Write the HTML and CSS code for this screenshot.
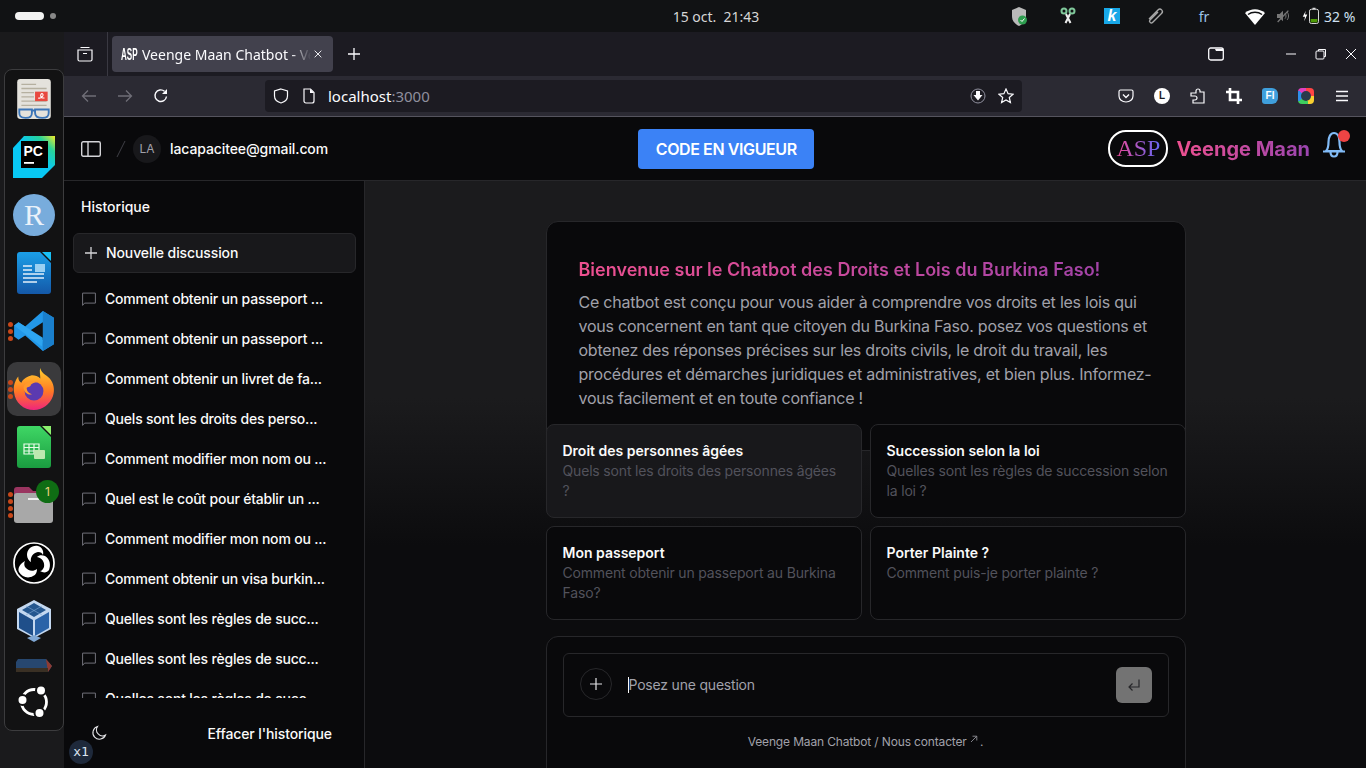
FILE: index.html
```html
<!DOCTYPE html>
<html lang="fr">
<head>
    <meta charset="utf-8">
    <title>Veenge Maan Chatbot</title>
    <link rel="stylesheet" href="styles.css">
</head>
<body>
    <!-- barre du haut du bureau -->
    <header class="topbar">
        <div class="workspaces"><span class="ws-pill"></span><span class="ws-dot"></span></div>
        <div class="clock">15 oct.&nbsp;&nbsp;21:43</div>
        <div class="tray">
            <svg class="tray-icon" viewBox="0 0 24 24"><path d="M11 3l7 3v6c0 5-3 8-7 10-4-2-7-5-7-10V6z" fill="#b9b9b9"/><circle cx="14.500" cy="16" r="4.500" fill="#2e9e4f"/><path d="M12.500 16l1.500 1.500 2.500-3" stroke="#fff" fill="none"/></svg>
            <svg class="tray-icon wide" viewBox="0 0 24 24" fill="none"><circle cx="8" cy="7" r="2.500" stroke="#7fc79a" stroke-width="2"/><circle cx="16" cy="7" r="2.500" stroke="#7fc79a" stroke-width="2"/><path d="M10 10l4.500 9M14 10l-4.500 9" stroke="#eee" stroke-width="2"/></svg>
            <span class="tray-k">k</span>
            <svg class="tray-icon" viewBox="0 0 24 24" fill="none"><path d="M5 15l9-9c2.500-2.500 6 1 3.500 3.500l-9 9c-1.500 1.500-4-1-2.500-2.500l8-8" stroke="#a8a8a8" stroke-width="1.400"/></svg>
            <span class="tray-lang wide">fr</span>
            <svg class="tray-icon wifi" viewBox="0 0 24 24"><path d="M2 9c6-5 14-5 20 0l-10 12z" fill="#fff"/><path d="M5 10.500c4-3 10-3 14 0" stroke="#111214" stroke-width="1.500" fill="none"/></svg>
            <svg class="tray-icon sound" viewBox="0 0 24 24" fill="#777"><path d="M3 9h4l5-5v16l-5-5H3z"/><path d="M15 8c2 2 2 6 0 8M18 6c3 3 3 9 0 12" stroke="#777" stroke-width="1.500" fill="none"/><path d="M4 21L20 4" stroke="#777" stroke-width="2"/></svg>
            <svg class="tray-batt" viewBox="0 0 24 24" fill="none"><path d="M5 5L1 13h3l-1 6 4-9H4z" fill="#fff"/><rect x="10" y="3" width="12" height="19" rx="2.500" stroke="#ddd" stroke-width="1.300"/><rect x="14" y="1" width="4" height="2" fill="#ddd"/><rect x="11.500" y="16" width="9" height="4.500" fill="#4e9a06"/></svg>
            <span class="tray-pct">32 %</span>
        </div>
    </header>

    <div class="desktop">
        <!-- dock -->
        <div class="dock-col">
            <nav class="dock">
                <div class="dock-item">
                    <svg class="app" viewBox="0 0 34 40"><rect x="1" y="1" width="32" height="38" rx="3" fill="#e4e2dc"/><path d="M5 6h14M5 10h24M5 14h12M5 18h12M5 22h24M5 26h24" stroke="#b5b0a0" stroke-width="1.200"/><rect x="18" y="13" width="12" height="9" fill="#e8493f"/><path d="M21 19c3 1 6-3 4-4s-3 5 2 4" stroke="#fff" fill="none"/><path d="M3 30h12v3c0 3-1 5-6 5s-6-2-6-5zM18 30h13v3c0 3-1 5-6 5s-7-2-7-5zM15 31h3" stroke="#3b75b8" stroke-width="1.800" fill="none"/></svg>
                </div>
                <div class="dock-item">
                    <svg class="app" viewBox="0 0 42 42"><defs><linearGradient id="pc" x1="0" y1="1" x2="1" y2="0"><stop offset=".55" stop-color="#08c8f4"/><stop offset=".8" stop-color="#28d39a"/><stop offset="1" stop-color="#f4ec28"/></linearGradient></defs><path d="M11 0h31v29L29 42H0V12z" fill="url(#pc)"/><rect x="8" y="5" width="27" height="27" fill="#000"/><text x="10.500" y="20" class="pc-text">PC</text><rect x="11" y="26" width="10" height="1.800" fill="#fff"/></svg>
                </div>
                <div class="dock-item">
                    <svg class="app" viewBox="0 0 42 42"><circle cx="21" cy="21" r="21" fill="#78acdc"/><text x="21" y="31" text-anchor="middle" class="r-text">R</text></svg>
                </div>
                <div class="dock-item">
                    <svg class="app" viewBox="0 0 34 42"><defs><linearGradient id="lo" x1="0" y1="0" x2="0" y2="1"><stop offset="0" stop-color="#1b9fe8"/><stop offset="1" stop-color="#1458a8"/></linearGradient></defs><path d="M3 0h20l11 11v28a3 3 0 0 1-3 3H3a3 3 0 0 1-3-3V3a3 3 0 0 1 3-3z" fill="url(#lo)"/><path d="M25 0l9 9V0z" fill="#19c0f5"/><path d="M6 14h9M6 18h9M6 22h21M6 26h21M6 30h14" stroke="#e3f0fa" stroke-width="1.700"/><rect x="18" y="12" width="10" height="8" fill="#9ad0f2"/></svg>
                </div>
                <div class="dock-item">
                    <span class="dots"><i></i><i></i><i></i></span>
                    <svg class="app" viewBox="0 0 38 38"><path d="M27 1l10 6v24l-10 6-16-14-6 4-4-3V14l4-3 6 4z" fill="#2297e8"/><path d="M27 1l10 6v24l-10 6z" fill="#1a7fcc"/><path d="M27 11L15 19l12 8z" fill="#111214"/><path d="M5 11L1 14l25 19 1-8z" fill="#2ea5f0"/></svg>
                </div>
                <div class="dock-item active">
                    <span class="dots"><i></i><i></i><i></i></span>
                    <svg class="app" viewBox="0 0 40 40"><defs><linearGradient id="ff" x1="0" y1="0" x2="0" y2="1"><stop offset="0" stop-color="#ffcf2e"/><stop offset=".55" stop-color="#ff7a24"/><stop offset="1" stop-color="#f0257c"/></linearGradient></defs><path d="M26 0c1 5 5 6 9 10 4 5 5 11 3 17-3 8-10 13-18 13C10 40 2 33 1 23 0 17 2 12 5 8c0 3 1 5 3 6 2-4 6-6 10-7 3 0 6 1 8 3 0-4-1-7 0-10z" fill="url(#ff)"/><circle cx="20" cy="22" r="9" fill="#5b3ab0"/><path d="M10 18c3-6 11-7 16-4-4-1-7 0-9 2 0 2-3 2-4 3 0 3 2 5 5 6-4 1-8-2-8-7z" fill="#ff9a2a"/></svg>
                </div>
                <div class="dock-item">
                    <svg class="app" viewBox="0 0 34 42"><defs><linearGradient id="lc" x1="0" y1="0" x2="0" y2="1"><stop offset="0" stop-color="#3fd765"/><stop offset="1" stop-color="#1a9c40"/></linearGradient></defs><path d="M3 0h20l11 11v28a3 3 0 0 1-3 3H3a3 3 0 0 1-3-3V3a3 3 0 0 1 3-3z" fill="url(#lc)"/><path d="M25 0l9 9V0z" fill="#8cf06e"/><path d="M7 18h15v10H7zM7 21.500h15M7 25h15M12 18v10M17 18v10" stroke="#e8fbe8" stroke-width="1.200" fill="none"/><rect x="17" y="24" width="11" height="9" rx="1" fill="#bce8b0"/></svg>
                </div>
                <div class="dock-item">
                    <span class="dots four"><i></i><i></i><i></i><i></i></span>
                    <svg class="app folder" viewBox="0 0 40 36"><path d="M3 0h12l4 4h6a3 3 0 0 1 3 3v5H0V3a3 3 0 0 1 3-3z" fill="#9a3560"/><rect y="6" width="39" height="30" rx="3" fill="#a8a8a8"/><rect x="14" y="11" width="11" height="2" fill="#eee"/></svg>
                    <span class="badge">1</span>
                </div>
                <div class="dock-item">
                    <svg class="app" viewBox="0 0 42 42"><circle cx="21" cy="21" r="20" fill="#000" stroke="#fff" stroke-width="1.700"/><path d="M25 4c-6-1-11 3-11 9 0 3 2 6 4 7-1-5 2-9 7-10 3 0 4 1 5 3 1-4-1-8-5-9zM6 30c3 5 9 7 14 4 3-1 4-4 4-7-4 3-9 2-12-2-1-2-1-4 0-6-4 2-8 7-6 11zM36 28c2-5 1-11-4-14-3-1-6-1-8 1 5 1 8 5 7 10-1 2-2 4-4 4 3 2 7 2 9-1z" fill="#fff"/></svg>
                </div>
                <div class="dock-item">
                    <svg class="app" viewBox="0 0 36 42"><path d="M18 0l17 9v20L18 38 1 29V9z" fill="#c4d8f0"/><path d="M17 20L3 12v16l14 8z" fill="#1f4f8a"/><path d="M19 20l14-8v16l-14 8z" fill="#2a63a8"/><path d="M18 3l12 7-12 7-12-7z" fill="#25578f"/><path d="M11 38l7 4 7-4-7-3z" fill="#7fa7d4"/><path d="M10 6l16 9M26 6l-16 9" stroke="#7fa7d4" stroke-width=".6"/></svg>
                </div>
                <div class="dock-item peek">
                    <svg class="app-peek" viewBox="0 0 38 14"><path d="M3 0h28l6 7-4 6H1V3z" fill="#27476f"/><path d="M31 0l6 7-4 6z" fill="#8e3a32"/><rect x="1" y="9" width="32" height="4" fill="#3a3024"/></svg>
                </div>
                <div class="dock-item">
                    <svg class="app small" viewBox="0 0 32 32"><circle cx="16" cy="16" r="12.500" stroke="#fff" stroke-width="2.800" fill="none"/><g fill="#fff" stroke="#121213" stroke-width="2"><circle cx="23" cy="4.500" r="5"/><circle cx="4.500" cy="14" r="5"/><circle cx="21.500" cy="27" r="5"/></g></svg>
                </div>
            </nav>
        </div>

        <!-- fenêtre du navigateur -->
        <div class="browser">
            <div class="tabbar">
                <svg class="tb-icon tab-view" viewBox="0 0 16 16" fill="none"><path d="M3.500 1.500h9M1 4h14v9.500a1.500 1.500 0 0 1-1.500 1.500h-11A1.500 1.500 0 0 1 1 13.500zM6 7.500h4" stroke="#fbfbfe" stroke-width="1.200"/></svg>
                <span class="tab-sep"></span>
                <div class="tab">
                    <span class="tab-fav">ASP</span>
                    <span class="tab-title">Veenge Maan Chatbot - Veenge Maan</span>
                    <svg class="tab-close" viewBox="0 0 12 12"><path d="M2 2l8 8M10 2l-8 8" stroke="#fbfbfe" stroke-width="1.100"/></svg>
                </div>
                <svg class="tb-icon tab-new" viewBox="0 0 16 16"><path d="M8 2v12M2 8h12" stroke="#fbfbfe" stroke-width="1.300"/></svg>
                <div class="win-btns">
                    <svg class="tb-icon win-folder" viewBox="0 0 16 16" fill="none"><rect x="0.700" y="2" width="14.600" height="12" rx="2" stroke="#fbfbfe" stroke-width="1.300"/><path d="M1 3h6l1 2h7V3z" fill="#fbfbfe"/></svg>
                    <svg class="win-icon win-min" viewBox="0 0 12 12"><path d="M1 6h10" stroke="#fbfbfe"/></svg>
                    <svg class="win-icon" viewBox="0 0 12 12" fill="none"><rect x="1" y="3" width="8" height="8" rx="1" stroke="#fbfbfe"/><path d="M3.500 3V1.500h7v7H9" stroke="#fbfbfe"/></svg>
                    <svg class="win-icon" viewBox="0 0 12 12"><path d="M1 1l10 10M11 1L1 11" stroke="#fbfbfe"/></svg>
                </div>
            </div>
            <div class="toolbar">
                <svg class="tb-icon nav-back" viewBox="0 0 16 16" fill="none"><path d="M15 8H1.500M7 2.500L1.500 8 7 13.500" stroke="#6f6e77" stroke-width="1.300"/></svg>
                <svg class="tb-icon nav-fwd" viewBox="0 0 16 16" fill="none"><path d="M1 8h13.500M9 2.500L14.500 8 9 13.500" stroke="#6f6e77" stroke-width="1.300"/></svg>
                <svg class="tb-icon nav-reload" viewBox="0 0 16 16" fill="none"><path d="M13.500 8.500A5.800 5.800 0 1 1 11.500 3.300" stroke="#fbfbfe" stroke-width="1.400"/><path d="M14 1v5h-5z" fill="#fbfbfe"/></svg>
                <div class="urlbar">
                    <svg class="tb-icon" viewBox="0 0 16 16" fill="none"><path d="M8 1l6.500 2v5c0 3.500-3 6-6.500 7-3.500-1-6.500-3.500-6.500-7V3z" stroke="#fbfbfe" stroke-width="1.200"/></svg>
                    <svg class="tb-icon url-page" viewBox="0 0 16 16" fill="none"><path d="M3 1h6.500L13 4.500V13a2 2 0 0 1-2 2H5a2 2 0 0 1-2-2z" stroke="#fbfbfe" stroke-width="1.200"/><path d="M9 1v4h4z" fill="#fbfbfe"/></svg>
                    <span class="url-text">localhost<span class="url-port">:3000</span></span>
                    <svg class="tb-icon url-dl" viewBox="0 0 16 16" fill="none"><circle cx="8" cy="8" r="7" stroke="#8f8f9d"/><path d="M6 3h4v4h2.500L8 12.500 3.500 7H6z" fill="#fbfbfe"/></svg>
                    <svg class="tb-icon url-star" viewBox="0 0 16 16" fill="none"><path d="M8 1l2.100 4.700 5 .5-3.800 3.300 1.100 5L8 11.900l-4.400 2.600 1.100-5L.9 6.200l5-.5z" stroke="#fbfbfe" stroke-width="1.200"/></svg>
                </div>
                <div class="tb-right">
                    <svg class="tb-icon" viewBox="0 0 16 16" fill="none"><path d="M1 3.500A1.500 1.500 0 0 1 2.500 2h11A1.500 1.500 0 0 1 15 3.500V8c0 3.500-3 6-7 6s-7-2.500-7-6z" stroke="#fbfbfe" stroke-width="1.200"/><path d="M5 6.500l3 3 3-3" stroke="#fbfbfe" stroke-width="1.400"/></svg>
                    <span class="ext-l">L</span>
                    <svg class="tb-icon" viewBox="0 0 16 16" fill="none"><path d="M6 5V3a2 2 0 0 1 4 0v1h4v11H3v-3h2a2 2 0 0 0 0-4H1V5z" stroke="#fbfbfe" stroke-width="1.200"/></svg>
                    <svg class="tb-icon" viewBox="0 0 16 16" fill="none"><path d="M4 0v12h12M0 4h12v12" stroke="#fff" stroke-width="2.600"/></svg>
                    <span class="ext-fi">FI</span>
                    <span class="ext-color"><i></i></span>
                    <svg class="tb-icon" viewBox="0 0 16 16"><path d="M2 3.500h12M2 8h12M2 12.500h12" stroke="#fbfbfe" stroke-width="1.300"/></svg>
                </div>
            </div>

            <!-- la page -->
            <div class="page">
                <div class="page-head">
                    <div class="head-left">
                        <svg class="head-toggle" viewBox="0 0 20 16" fill="none"><rect x="0.700" y="0.700" width="18.600" height="14.600" rx="1.500" stroke="#d4d4d8" stroke-width="1.400"/><path d="M7 1v14" stroke="#d4d4d8" stroke-width="1.400"/></svg>
                        <svg class="head-slash" viewBox="0 0 10 20"><path d="M1 18L9 2" stroke="#3f3f46"/></svg>
                        <span class="avatar">LA</span>
                        <span class="email">lacapacitee@gmail.com</span>
                    </div>
                    <button class="code-btn">CODE EN VIGUEUR</button>
                    <div class="head-right">
                        <span class="asp-badge"><span class="asp-text">ASP</span></span>
                        <span class="brand">Veenge Maan</span>
                        <span class="bell">
                            <svg viewBox="0 0 24 27" fill="none"><path d="M4 20c2-2 2.500-5 2.500-9 0-5 2-9 5.500-9s5.500 4 5.500 9c0 4 .5 7 2.500 9zM1 20.500h22M8.500 21c0 6 7 6 7 0" stroke="#82bcf8" stroke-width="2.200"/></svg>
                            <i class="bell-dot"></i>
                        </span>
                    </div>
                </div>
                <div class="page-body">
                    <aside class="sidebar">
                        <div class="side-title">Historique</div>
                        <button class="new-chat">
                            <svg viewBox="0 0 14 14"><path d="M7 1v12M1 7h12" stroke="#d4d4d8" stroke-width="1.300"/></svg>
                            <span>Nouvelle discussion</span>
                        </button>
                        <ul class="history">
                            <li><svg viewBox="0 0 14 14" fill="none"><path d="M.6 13.400V1.100h12.800v10H2.500z" stroke="#71717a"/></svg><span>Comment obtenir un passeport ...</span></li>
                            <li><svg viewBox="0 0 14 14" fill="none"><path d="M.6 13.400V1.100h12.800v10H2.500z" stroke="#71717a"/></svg><span>Comment obtenir un passeport ...</span></li>
                            <li><svg viewBox="0 0 14 14" fill="none"><path d="M.6 13.400V1.100h12.800v10H2.500z" stroke="#71717a"/></svg><span>Comment obtenir un livret de fa...</span></li>
                            <li><svg viewBox="0 0 14 14" fill="none"><path d="M.6 13.400V1.100h12.800v10H2.500z" stroke="#71717a"/></svg><span>Quels sont les droits des perso...</span></li>
                            <li><svg viewBox="0 0 14 14" fill="none"><path d="M.6 13.400V1.100h12.800v10H2.500z" stroke="#71717a"/></svg><span>Comment modifier mon nom ou ...</span></li>
                            <li><svg viewBox="0 0 14 14" fill="none"><path d="M.6 13.400V1.100h12.800v10H2.500z" stroke="#71717a"/></svg><span>Quel est le coût pour établir un ...</span></li>
                            <li><svg viewBox="0 0 14 14" fill="none"><path d="M.6 13.400V1.100h12.800v10H2.500z" stroke="#71717a"/></svg><span>Comment modifier mon nom ou ...</span></li>
                            <li><svg viewBox="0 0 14 14" fill="none"><path d="M.6 13.400V1.100h12.800v10H2.500z" stroke="#71717a"/></svg><span>Comment obtenir un visa burkin...</span></li>
                            <li><svg viewBox="0 0 14 14" fill="none"><path d="M.6 13.400V1.100h12.800v10H2.500z" stroke="#71717a"/></svg><span>Quelles sont les règles de succ...</span></li>
                            <li><svg viewBox="0 0 14 14" fill="none"><path d="M.6 13.400V1.100h12.800v10H2.500z" stroke="#71717a"/></svg><span>Quelles sont les règles de succ...</span></li>
                            <li><svg viewBox="0 0 14 14" fill="none"><path d="M.6 13.400V1.100h12.800v10H2.500z" stroke="#71717a"/></svg><span>Quelles sont les règles de succ...</span></li>
                        </ul>
                        <div class="side-foot">
                            <svg viewBox="0 0 16 16" fill="none"><path d="M6.500 1.500A6.500 6.500 0 1 0 14.500 10 6 6 0 0 1 6.500 1.500z" stroke="#e4e4e7" stroke-width="1.100"/></svg>
                            <span>Effacer l'historique</span>
                        </div>
                    </aside>
                    <main class="chat">
                        <div class="chat-col">
                            <section class="intro">
                                <h1>Bienvenue sur le Chatbot des Droits et Lois du Burkina Faso!</h1>
                                <p>Ce chatbot est conçu pour vous aider à comprendre vos droits et les lois qui vous concernent en tant que citoyen du Burkina Faso. posez vos questions et obtenez des réponses précises sur les droits civils, le droit du travail, les procédures et démarches juridiques et administratives, et bien plus. Informez-vous facilement et en toute confiance !</p>
                            </section>
                            <div class="suggestions">
                                <div class="sugg hover"><h2>Droit des personnes âgées</h2><p>Quels sont les droits des personnes âgées ?</p></div>
                                <div class="sugg"><h2>Succession selon la loi</h2><p>Quelles sont les règles de succession selon la loi ?</p></div>
                                <div class="sugg"><h2>Mon passeport</h2><p>Comment obtenir un passeport au Burkina Faso?</p></div>
                                <div class="sugg"><h2>Porter Plainte ?</h2><p>Comment puis-je porter plainte ?</p></div>
                            </div>
                            <div class="composer">
                                <div class="input-row">
                                    <span class="attach"><svg viewBox="0 0 14 14"><path d="M7 1v12M1 7h12" stroke="#e4e4e7" stroke-width="1.200"/></svg></span>
                                    <span class="caret"></span>
                                    <span class="placeholder">Posez une question</span>
                                    <span class="send"><svg viewBox="0 0 16 16" fill="none"><path d="M13 2.500V10H3M6.500 6.500L3 10l3.500 3.500" stroke="#27272a" stroke-width="1.200"/></svg></span>
                                </div>
                                <div class="composer-foot">Veenge Maan Chatbot / Nous contacter <svg viewBox="0 0 8 8" fill="none"><path d="M1 7l5.500-5.500M2.500 1.200h4.300v4.300" stroke="#a1a1aa" stroke-width=".8"/></svg>.</div>
                            </div>
                        </div>
                    </main>
                </div>
            </div>
        </div>
    </div>
    <span class="zoom-badge">x1</span>
</body>
</html>
```

FILE: styles.css
```css
* {
    box-sizing: border-box;
}
html, body {
    margin: 0;
    height: 100%;
    overflow: hidden;
}
body {
    width: 1366px;
    height: 768px;
    display: flex;
    flex-direction: column;
    position: relative;
    background-color: #111214;
    font-family: "Inter", "Liberation Sans", sans-serif;
    color: #fafafa;
}
svg {
    display: block;
    flex-shrink: 0;
}

/* barre du haut */
.topbar {
    height: 32px;
    flex-shrink: 0;
    display: flex;
    align-items: center;
    background-color: #111214;
    font-family: "Noto Sans", sans-serif;
    color: #d6d6d6;
    font-size: 14px;
}
.workspaces {
    width: 641px;
    padding-left: 15px;
    display: flex;
    align-items: center;
    gap: 6px;
}
.ws-pill {
    width: 29px;
    height: 8px;
    border-radius: 4px;
    background-color: #f2f2f2;
}
.ws-dot {
    width: 6px;
    height: 6px;
    border-radius: 50%;
    background-color: #888;
}
.clock {
    width: 150px;
    text-align: center;
}
.tray {
    flex: 1;
    display: flex;
    align-items: center;
    padding-left: 217px;
    gap: 20px;
}
.tray-icon {
    width: 24px;
    height: 24px;
}
.tray-icon.wide {
    margin-left: 4px;
}
.tray-k {
    width: 16px;
    height: 16px;
    margin: 0 4px;
    background-color: #18a8e8;
    color: #fff;
    font: italic 700 16px/16px "Liberation Sans", sans-serif;
    text-align: center;
}
.tray-lang {
    width: 24px;
    margin-left: 4px;
    text-align: center;
    color: #9cc4e8;
}
.tray-icon.wifi {
    margin-left: 7px;
    margin-right: -17px;
}
.tray-icon.sound {
    width: 16px;
    height: 16px;
    margin-left: 5px;
    margin-right: -17px;
}
.tray-batt {
    width: 20px;
    height: 18px;
    margin-left: 7px;
    margin-right: -17px;
}
.tray-pct {
    white-space: nowrap;
    color: #cfe0f0;
}

/* dock */
.desktop {
    flex: 1;
    display: flex;
    min-height: 0;
}
.dock-col {
    width: 65px;
    flex-shrink: 0;
    padding: 37px 1px 0 4px;
    background-color: #1a1a1c;
}
.dock {
    height: 662px;
    border: 1px solid #3c3c3e;
    border-radius: 8px;
    background-color: #121213;
}
.dock-item {
    height: 58px;
    position: relative;
    display: flex;
    align-items: center;
    justify-content: center;
    margin-left: -1px;
}
.dock-item.peek {
    height: 23px;
    align-items: flex-start;
    padding-top: 9px;
}
.dock-item.active::before {
    content: "";
    position: absolute;
    left: 3px;
    top: 2px;
    width: 54px;
    height: 54px;
    border-radius: 10px;
    background-color: #3a3a3c;
}
.app {
    position: relative;
    width: 42px;
    height: 42px;
}
.app.small {
    width: 32px;
    height: 32px;
}
.app.folder {
    width: 40px;
    height: 36px;
}
.app-peek {
    width: 38px;
    height: 14px;
}
.pc-text {
    font: 700 14px "Liberation Sans", sans-serif;
    fill: #fff;
}
.r-text {
    font: 30px "Liberation Serif", serif;
    fill: #eaf2fa;
}
.dots {
    position: absolute;
    left: 4px;
    top: 0;
    bottom: 0;
    display: flex;
    flex-direction: column;
    justify-content: center;
    gap: 2px;
    z-index: 1;
}
.dots i {
    display: block;
    width: 5px;
    height: 5px;
    border-radius: 50%;
    background-color: #c8481a;
}
.badge {
    position: absolute;
    left: 32px;
    top: 4px;
    width: 23px;
    height: 23px;
    border-radius: 50%;
    background-color: #0f6d14;
    color: #f0d080;
    font-size: 12px;
    line-height: 23px;
    text-align: center;
}

/* navigateur */
.browser {
    flex: 1;
    min-width: 0;
    display: flex;
    flex-direction: column;
    margin-left: -1px;
}
.tabbar {
    height: 44px;
    flex-shrink: 0;
    display: flex;
    align-items: center;
    background-color: #1c1b22;
}
.tb-icon {
    width: 16px;
    height: 16px;
}
.tab-view {
    margin-left: 13px;
}
.tab-sep {
    width: 1px;
    height: 44px;
    margin-left: 14px;
    background-color: #3a3942;
}
.tab {
    width: 221px;
    height: 36px;
    margin-left: 4px;
    padding: 0 10px 0 9px;
    display: flex;
    align-items: center;
    border-radius: 4px;
    background-color: #42414d;
}
.tab-fav {
    width: 16px;
    font: 700 13px "Liberation Sans", sans-serif;
    color: #fff;
    flex-shrink: 0;
    transform: scale(.62, 1.2);
    transform-origin: left center;
}
.tab-title {
    flex: 1;
    margin-left: 5px;
    overflow: hidden;
    white-space: nowrap;
    font: 14px "Noto Sans", sans-serif;
    color: #fbfbfe;
    -webkit-mask-image: linear-gradient(to right, #000 88%, transparent);
    mask-image: linear-gradient(to right, #000 88%, transparent);
}
.tab-close {
    width: 10px;
    height: 10px;
    margin-left: 2px;
}
.tab-new {
    margin-left: 13px;
}
.win-btns {
    flex: 1;
    display: flex;
    align-items: center;
    justify-content: flex-end;
    padding-right: 9px;
    gap: 18px;
}
.win-folder {
    margin-right: 43px;
}
.win-icon {
    width: 12px;
    height: 12px;
}
.toolbar {
    height: 41px;
    flex-shrink: 0;
    display: flex;
    align-items: center;
    padding-left: 17px;
    background-color: #2b2a33;
    border-bottom: 1px solid #55545e;
}
.nav-fwd, .nav-reload {
    margin-left: 20px;
}
.urlbar {
    width: 757px;
    height: 32px;
    margin-left: 96px;
    padding: 0 8px;
    display: flex;
    align-items: center;
    border-radius: 4px;
    background-color: #1c1b22;
}
.url-page {
    margin-left: 12px;
}
.url-text {
    flex: 1;
    margin-left: 11px;
    font: 15px "Noto Sans", sans-serif;
    color: #fbfbfe;
}
.url-port {
    color: #8f8f9d;
}
.url-star {
    margin-left: 12px;
    margin-right: 0;
}
.tb-right {
    margin-left: 96px;
    display: flex;
    align-items: center;
    gap: 20px;
}
.ext-l {
    width: 16px;
    height: 16px;
    border-radius: 50%;
    background-color: #fff;
    color: #1c1b22;
    font: 700 10px/16px "Liberation Sans", sans-serif;
    text-align: center;
}
.ext-fi {
    width: 16px;
    height: 16px;
    border-radius: 3px 6px 6px 3px;
    background-color: #3f9fdc;
    color: #fff;
    font: 700 10px/16px "Liberation Sans", sans-serif;
    text-align: center;
}
.ext-color {
    width: 16px;
    height: 16px;
    padding: 3px;
    border-radius: 4px;
    background: conic-gradient(#f44 0 25%, #f8d030 25% 45%, #3ecf5e 45% 65%, #2f8fe8 65% 85%, #e040c0 85%);
}
.ext-color i {
    display: block;
    width: 10px;
    height: 10px;
    border-radius: 50%;
    background-color: #2b3a4a;
}

/* page */
.page {
    flex: 1;
    min-height: 0;
    display: flex;
    flex-direction: column;
    background-color: #09090b;
}
.page-head {
    height: 64px;
    flex-shrink: 0;
    padding: 0 16px;
    display: flex;
    align-items: center;
    justify-content: space-between;
    border-bottom: 1px solid #27272a;
}
.head-left {
    display: flex;
    align-items: center;
    padding-right: 16px;
}
.head-toggle {
    width: 20px;
    height: 16px;
    margin-left: 1px;
}
.head-slash {
    width: 10px;
    height: 20px;
    margin-left: 15px;
}
.avatar {
    width: 28px;
    height: 28px;
    margin-left: 7px;
    border-radius: 50%;
    background-color: #18181b;
    color: #a1a1aa;
    font-size: 12px;
    line-height: 28px;
    text-align: center;
}
.email {
    margin-left: 9px;
    font-size: 14px;
    font-weight: 500;
    letter-spacing: -0.1px;
}
.code-btn {
    width: 176px;
    height: 40px;
    border: 0;
    border-radius: 4px;
    background-color: #3b82f6;
    color: #fff;
    font-family: inherit;
    font-size: 16px;
    font-weight: 600;
    letter-spacing: -0.4px;
}
.head-right {
    display: flex;
    align-items: center;
    padding-right: 4px;
}
.asp-badge {
    width: 60px;
    height: 37px;
    display: flex;
    align-items: center;
    justify-content: center;
    border: 2px solid #fff;
    border-radius: 18px;
}
.asp-text {
    font: 24px "Liberation Serif", serif;
    background: linear-gradient(to right, #ec4899, #6366f1);
    -webkit-background-clip: text;
    background-clip: text;
    color: transparent;
}
.brand {
    margin-left: 8px;
    font-size: 20px;
    font-weight: 700;
    background: linear-gradient(to right, #ee5090, #9a45b0);
    -webkit-background-clip: text;
    background-clip: text;
    color: transparent;
}
.bell {
    position: relative;
    width: 24px;
    height: 27px;
    margin: -9px 0 0 12px;
}
.bell svg {
    width: 24px;
    height: 27px;
}
.bell-dot {
    position: absolute;
    right: -4px;
    top: -1px;
    width: 12px;
    height: 12px;
    border-radius: 50%;
    background-color: #ef4444;
}

/* colonne d'historique */
.page-body {
    flex: 1;
    min-height: 0;
    display: flex;
}
.sidebar {
    width: 301px;
    flex-shrink: 0;
    padding: 0 8px 0 9px;
    display: flex;
    flex-direction: column;
    border-right: 1px solid #27272a;
}
.side-title {
    height: 52px;
    padding-left: 8px;
    flex-shrink: 0;
    font-size: 14px;
    font-weight: 500;
    line-height: 52px;
}
.new-chat {
    height: 40px;
    flex-shrink: 0;
    padding: 0 10px;
    display: flex;
    align-items: center;
    gap: 8px;
    border: 1px solid #27272a;
    border-radius: 6px;
    background-color: #18181b;
    color: #fafafa;
    font-family: inherit;
    font-size: 14px;
    font-weight: 500;
    letter-spacing: -0.1px;
}
.new-chat span {
    margin-top: -2px;
}
.new-chat svg {
    width: 14px;
    height: 14px;
}
.history {
    flex: 1;
    min-height: 0;
    margin: 6px 0 0;
    padding: 0;
    list-style: none;
    overflow: hidden;
}
.history li {
    height: 40px;
    padding-left: 9px;
    display: flex;
    align-items: center;
    gap: 9px;
    font-size: 14px;
    font-weight: 500;
    letter-spacing: -0.2px;
    white-space: nowrap;
}
.history span {
    margin-top: -2px;
}
.history svg {
    width: 14px;
    height: 14px;
}
.side-foot {
    height: 70px;
    flex-shrink: 0;
    padding: 0 24px 0 18px;
    display: flex;
    align-items: center;
    justify-content: space-between;
    font-size: 14px;
    font-weight: 500;
    letter-spacing: -0.1px;
}
.side-foot svg {
    width: 16px;
    height: 16px;
}

/* zone de discussion */
.chat {
    flex: 1;
    min-width: 0;
    overflow: hidden;
    display: flex;
    justify-content: center;
    background: linear-gradient(to bottom, #1b1b1d 37%, #0c0c0e 62%);
}
.chat-col {
    width: 640px;
    padding-top: 40px;
}
.intro {
    height: 230px;
    padding: 34px 32px 0;
    border: 1px solid #27272a;
    border-radius: 12px;
    background-color: #09090b;
}
.intro h1 {
    margin: 0 0 6px;
    font-size: 18px;
    line-height: 28px;
    font-weight: 600;
    background: linear-gradient(to right, #ee5090, #a343a8);
    -webkit-background-clip: text;
    background-clip: text;
    color: transparent;
    width: max-content;
}
.intro p {
    margin: 0;
    font-size: 16px;
    line-height: 24px;
    letter-spacing: -0.23px;
    color: #a1a1aa;
}
.suggestions {
    margin-top: -27px;
    position: relative;
    display: grid;
    grid-template-columns: 1fr 1fr;
    gap: 8px;
}
.sugg {
    height: 94px;
    padding: 16px;
    border: 1px solid #27272a;
    border-radius: 8px;
    background-color: #09090b;
    font-size: 14px;
    line-height: 20px;
}
.sugg.hover {
    background-color: #18181b;
}
.sugg h2 {
    margin: 0;
    font-size: 14px;
    font-weight: 600;
}
.sugg p {
    margin: 0;
    letter-spacing: -0.17px;
    color: #52525b;
}
.composer {
    margin-top: 16px;
    padding: 16px;
    height: 160px;
    border: 1px solid #27272a;
    border-radius: 12px 12px 0 0;
    background-color: #09090b;
}
.input-row {
    height: 64px;
    padding: 0 16px;
    display: flex;
    align-items: center;
    border: 1px solid #27272a;
    border-radius: 6px;
}
.attach {
    width: 32px;
    height: 32px;
    margin-top: -2px;
    display: flex;
    align-items: center;
    justify-content: center;
    border: 1px solid #27272a;
    border-radius: 50%;
}
.attach svg {
    width: 14px;
    height: 14px;
}
.caret {
    width: 1px;
    height: 16px;
    margin-left: 16px;
    background-color: #fafafa;
}
.placeholder {
    flex: 1;
    margin-top: -2px;
    font-size: 14px;
    letter-spacing: -0.2px;
    color: #a1a1aa;
}
.send {
    width: 36px;
    height: 36px;
    display: flex;
    align-items: center;
    justify-content: center;
    border-radius: 6px;
    background-color: #737373;
}
.send svg {
    width: 16px;
    height: 16px;
}
.composer-foot {
    margin-top: 16px;
    display: flex;
    justify-content: center;
    font-size: 12px;
    line-height: 18px;
    letter-spacing: -0.15px;
    color: #a1a1aa;
    white-space: pre;
}
.composer-foot svg {
    width: 8px;
    height: 8px;
    margin: 2px 2px 0 0;
}

.zoom-badge {
    position: absolute;
    left: 69px;
    top: 740px;
    width: 24px;
    height: 24px;
    border-radius: 50%;
    background-color: #1e293b;
    color: #dbe4f0;
    font: 13px/24px "DejaVu Sans Mono", monospace;
    text-align: center;
}
```
